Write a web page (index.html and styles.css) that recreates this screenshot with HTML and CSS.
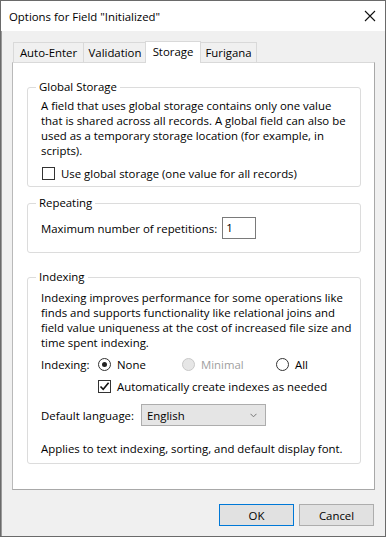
FILE: index.html
```html
<!DOCTYPE html>
<html lang="en">
<head>
    <meta charset="UTF-8">
    <title>Options for Field "Initialized"</title>
    <link rel="stylesheet" href="styles.css">
</head>
<body>
    <div class="dialog">
        <div class="titlebar">
            <span class="title">Options for Field "Initialized"</span>
            <svg class="close" width="12" height="12" viewBox="0 0 12 12">
                <path d="M1 1 L11 11 M11 1 L1 11" stroke="#111" stroke-width="1.1" fill="none"/>
            </svg>
        </div>

        <div class="dialog-body">
            <div class="tabs">
                <div class="tab tab-auto">Auto-Enter</div>
                <div class="tab tab-valid">Validation</div>
                <div class="tab tab-storage active">Storage</div>
                <div class="tab tab-furi">Furigana</div>
            </div>

            <div class="panel">
                <fieldset class="group group-global">
                    <legend>Global Storage</legend>
                    <p class="desc">A field that uses global storage contains only one value<br>that is shared across all records. A global field can also be<br>used as a temporary storage location (for example, in<br>scripts).</p>
                    <label class="check-row">
                        <span class="checkbox"></span>
                        <span>Use global storage (one value for all records)</span>
                    </label>
                </fieldset>

                <fieldset class="group group-repeat">
                    <legend>Repeating</legend>
                    <div class="repeat-row">
                        <span>Maximum number of repetitions:</span>
                        <span class="textbox">1</span>
                    </div>
                </fieldset>

                <fieldset class="group group-index">
                    <legend>Indexing</legend>
                    <p class="desc">Indexing improves performance for some operations like<br>finds and supports functionality like relational joins and<br>field value uniqueness at the cost of increased file size and<br>time spent indexing.</p>
                    <div class="radio-row">
                        <span class="radio-label">Indexing:</span>
                        <span class="radio-opt opt-none"><span class="radio checked"></span>None</span>
                        <span class="radio-opt opt-min disabled"><span class="radio"></span>Minimal</span>
                        <span class="radio-opt opt-all"><span class="radio"></span>All</span>
                    </div>
                    <label class="check-row auto-row">
                        <span class="checkbox checked">
                            <svg width="11" height="11" viewBox="0 0 11 11">
                                <path d="M1.5 5.5 L4.2 8.3 L9.6 1.8" stroke="#111" stroke-width="1.6" fill="none"/>
                            </svg>
                        </span>
                        <span>Automatically create indexes as needed</span>
                    </label>
                    <div class="lang-row">
                        <span>Default language:</span>
                        <span class="select">English
                            <svg class="chevron" width="7" height="5" viewBox="0 0 7 5">
                                <path d="M0.5 0.8 L3.5 3.8 L6.5 0.8" stroke="#777" stroke-width="1" fill="none"/>
                            </svg>
                        </span>
                    </div>
                    <p class="note">Applies to text indexing, sorting, and default display font.</p>
                </fieldset>
            </div>

            <div class="button-row">
                <button class="button default">OK</button>
                <button class="button">Cancel</button>
            </div>
        </div>
    </div>
</body>
</html>
```
FILE: styles.css
```css
body {
    margin: 0;
    padding: 0;
    font-family: "Open Sans", "Noto Sans", sans-serif;
    font-size: 11.4px;
    color: #000;
    background: #fff;
}

.dialog {
    width: 386px;
    height: 537px;
    box-sizing: border-box;
    border: 1px solid #6a6a6a;
    box-shadow: inset 1px 0 0 #9a9a9a;
    display: flex;
    flex-direction: column;
    background: #f0f0f0;
}

.titlebar {
    height: 30px;
    background: #fff;
    display: flex;
    align-items: center;
    justify-content: space-between;
    padding: 0 9px 0 8px;
    font-size: 11.4px;
}

.dialog-body {
    flex: 1;
    padding: 10px 10px 0 11px;
    display: flex;
    flex-direction: column;
}

/* tabs */
.tabs {
    display: flex;
    align-items: flex-end;
    height: 21px;
    padding-left: 1px;
}

.tab {
    box-sizing: border-box;
    height: 20px;
    border: 1px solid #d9d9d9;
    border-bottom: none;
    background: #f0f0f0;
    text-align: center;
    line-height: 19px;
}

.tab-auto { width: 71px; }
.tab-valid { width: 64px; margin-left: -1px; }
.tab-storage { width: 56px; margin-left: -2px; }
.tab-furi { width: 57px; margin-left: -1px; }

.tab.active {
    position: relative;
    z-index: 1;
    height: 22px;
    margin-bottom: -1px;
    background: #fff;
    line-height: 20px;
}

.panel {
    box-sizing: border-box;
    width: 363px;
    height: 428px;
    background: #fff;
    border: 1px solid #d9d9d9;
    border-right-color: #a8a8a8;
    border-bottom-color: #a8a8a8;
    border-left-color: #b9b9b9;
    padding: 16px 0 0 14px;
}

/* group boxes */
.group {
    width: 334px;
    box-sizing: border-box;
    margin: 0;
    padding: 0 0 0 13px;
    border: 1px solid #dcdcdc;
    border-radius: 3px;
}

.group legend {
    margin-left: -5px;
    padding: 0 3px;
    line-height: 16px;
}

.desc,
.note {
    margin: 0;
    line-height: 15px;
}

.group-global .desc { margin-top: 3px; }

.check-row {
    display: flex;
    align-items: center;
    gap: 6px;
    height: 16px;
}

.group-global .check-row {
    margin: 7px 0 5px 1px;
}

.checkbox {
    box-sizing: border-box;
    width: 13px;
    height: 13px;
    border: 1px solid #333;
    background: #fff;
    display: flex;
    align-items: center;
    justify-content: center;
}

.group-repeat {
    margin-top: 8px;
}

.repeat-row {
    display: flex;
    align-items: center;
    gap: 5px;
    margin: 6px 0 13px;
}

.textbox {
    box-sizing: border-box;
    width: 34px;
    height: 22px;
    border: 1px solid #7a7a7a;
    padding-left: 3px;
    line-height: 20px;
}

.group-index {
    margin-top: 16px;
}

.group-index .desc { margin-top: 5px; }

.radio-row {
    display: flex;
    align-items: center;
    height: 15px;
    margin-top: 7px;
}

.radio-label { width: 57px; }

.radio-opt {
    display: flex;
    align-items: center;
    gap: 6px;
}

.opt-none { width: 84px; }
.opt-min { width: 94px; }

.radio-opt.disabled { color: #a0a0a0; }

.radio {
    box-sizing: border-box;
    width: 13px;
    height: 13px;
    border: 1px solid #333;
    border-radius: 50%;
    background: #fff;
    display: flex;
    align-items: center;
    justify-content: center;
}

.radio.checked::after {
    content: "";
    width: 5px;
    height: 5px;
    border-radius: 50%;
    background: #222;
}

.disabled .radio {
    border-color: #c8c8c8;
    background: #e6e6e6;
}

.auto-row {
    margin: 7px 0 0 57px;
    height: 15px;
}

.lang-row {
    display: flex;
    align-items: center;
    gap: 7px;
    margin-top: 10px;
}

.select {
    box-sizing: border-box;
    width: 125px;
    height: 22px;
    border: 1px solid #adadad;
    background: #e5e5e5;
    display: flex;
    align-items: center;
    justify-content: space-between;
    padding: 0 8px 0 5px;
}

.note {
    margin: 15px 0 7px;
}

/* buttons */
.button-row {
    display: flex;
    justify-content: flex-end;
    gap: 5px;
    margin-top: 14px;
    padding-right: 1px;
}

.button {
    box-sizing: border-box;
    width: 75px;
    height: 22px;
    border: 1px solid #adadad;
    background: #e1e1e1;
    font-family: "Open Sans", "Noto Sans", sans-serif;
    font-size: 11.4px;
    color: #000;
    padding: 0;
}

.button.default {
    border-color: #0078d7;
}
```
